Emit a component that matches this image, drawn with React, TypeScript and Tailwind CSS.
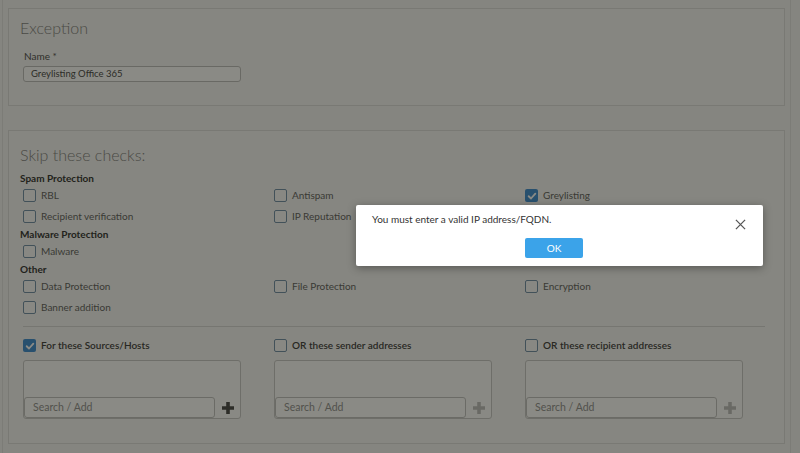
import React from "react";

const font = { fontFamily: "Lato, 'Open Sans', 'Liberation Sans', sans-serif" };

function Box({ checked }: { checked?: boolean }) {
  return checked ? (
    <span className="flex h-[13px] w-[13px] shrink-0 items-center justify-center rounded-[2px] bg-[#3a8ad0]">
      <svg viewBox="0 0 12 12" className="h-[10px] w-[10px]">
        <path d="M2 6.3 L4.8 9 L10 3.2" fill="none" stroke="#fff" strokeWidth="2.2" strokeLinecap="round" strokeLinejoin="round" />
      </svg>
    </span>
  ) : (
    <span className="block h-[13px] w-[13px] shrink-0 rounded-[2px] border-[1.5px] border-[#6f8ca6] bg-[#fafafa]" />
  );
}

function Check({ label, checked, strong }: { label: string; checked?: boolean; strong?: boolean }) {
  return (
    <div className="flex h-[21px] items-center gap-[5px] pl-[3px]">
      <Box checked={checked} />
      <span className={strong ? "text-[10px] font-semibold text-[#3a3a3a]" : "text-[10px] text-[#5e5e5e]"}>{label}</span>
    </div>
  );
}

function Heading({ children }: { children: React.ReactNode }) {
  return <div className="h-[14px] text-[10px] font-bold leading-[14px] text-[#2e2e2e]">{children}</div>;
}

function ListBox({ active }: { active?: boolean }) {
  return (
    <div className="mt-[4px] ml-[3px] flex h-[59px] w-[218px] flex-col justify-end rounded-[3px] border border-[#c6c6c6] bg-[#fcfcfc]">
      <div className="flex h-[21px] items-stretch">
        <div className="flex flex-1 items-center rounded-[3px] border border-[#c0c0c0] bg-white pl-[8px] text-[10.5px] text-[#8e8e8e]">
          Search / Add
        </div>
        <div className="flex w-[25px] items-center justify-center">
          <svg viewBox="0 0 14 14" className="h-[14px] w-[14px]">
            <path d="M7 1 V13 M1 7 H13" stroke={active ? "#444" : "#bdbdbd"} strokeWidth="3.6" />
          </svg>
        </div>
      </div>
    </div>
  );
}

export default function App() {
  return (
    <div style={font} className="relative h-[453px] w-[800px] overflow-hidden bg-[#f4f4f4]">
      <div className="ml-[2px] flex h-full w-[789px] flex-col border-x border-[#e2e2e2] px-[5px] pt-[8px]">
        {/* Exception panel */}
        <div className="h-[98px] border border-[#dcdcdc] bg-[#f6f6f6] pl-[11px] pt-[8px]">
          <div className="h-[22px] text-[16px] font-light leading-[22px] text-[#7e7e7e]">Exception</div>
          <div className="mt-[10px] h-[14px] pl-[4px] text-[10px] leading-[14px] text-[#4a4a4a]">Name *</div>
          <div className="mt-[3px] ml-[3px] flex h-[16px] w-[218px] items-center rounded-[3px] border border-[#bdbdbd] bg-white pl-[7px] text-[9.5px] text-[#444]">
            Greylisting Office 365
          </div>
        </div>

        {/* Skip checks panel */}
        <div className="mt-[24px] h-[314px] border border-[#dcdcdc] bg-[#f6f6f6] pl-[11px] pt-[13px]">
          <div className="h-[22px] text-[16px] font-light leading-[22px] text-[#7e7e7e]">Skip these checks:</div>
          <div className="mt-[5px]">
            <Heading>Spam Protection</Heading>
            <div className="grid grid-cols-[251px_251px_251px]">
              <Check label="RBL" />
              <Check label="Antispam" />
              <Check label="Greylisting" checked />
              <Check label="Recipient verification" />
              <Check label="IP Reputation" />
              <div />
            </div>
            <Heading>Malware Protection</Heading>
            <Check label="Malware" />
            <Heading>Other</Heading>
            <div className="grid grid-cols-[251px_251px_251px]">
              <Check label="Data Protection" />
              <Check label="File Protection" />
              <Check label="Encryption" />
              <Check label="Banner addition" />
            </div>
          </div>
          <div className="mt-[8px] ml-[3px] h-px w-[742px] bg-[#d6d6d6]" />
          <div className="mt-[8px] grid grid-cols-[251px_251px_251px]">
            <div>
              <Check label="For these Sources/Hosts" checked strong />
              <ListBox active />
            </div>
            <div>
              <Check label="OR these sender addresses" strong />
              <ListBox />
            </div>
            <div>
              <Check label="OR these recipient addresses" strong />
              <ListBox />
            </div>
          </div>
        </div>
      </div>

      {/* modal overlay */}
      <div className="absolute inset-0 bg-[rgba(21,21,11,0.5)]" />

      {/* dialog */}
      <div className="absolute left-[356px] top-[205px] h-[61px] w-[407px] rounded-[2px] bg-white shadow-[0_2px_8px_rgba(0,0,0,0.35)]">
        <div className="pl-[16px] pt-[7px] text-[10px] leading-[14px] text-[#333]">You must enter a valid IP address/FQDN.</div>
        <button className="absolute left-[169px] top-[33px] flex h-[20px] w-[58px] items-center justify-center rounded-[2px] bg-[#3ba3e9] text-[10px] text-white">
          OK
        </button>
        <svg viewBox="0 0 12 12" className="absolute right-[17px] top-[14px] h-[11px] w-[11px]">
          <path d="M1 1 L11 11 M11 1 L1 11" stroke="#555" strokeWidth="1.4" />
        </svg>
      </div>
    </div>
  );
}
